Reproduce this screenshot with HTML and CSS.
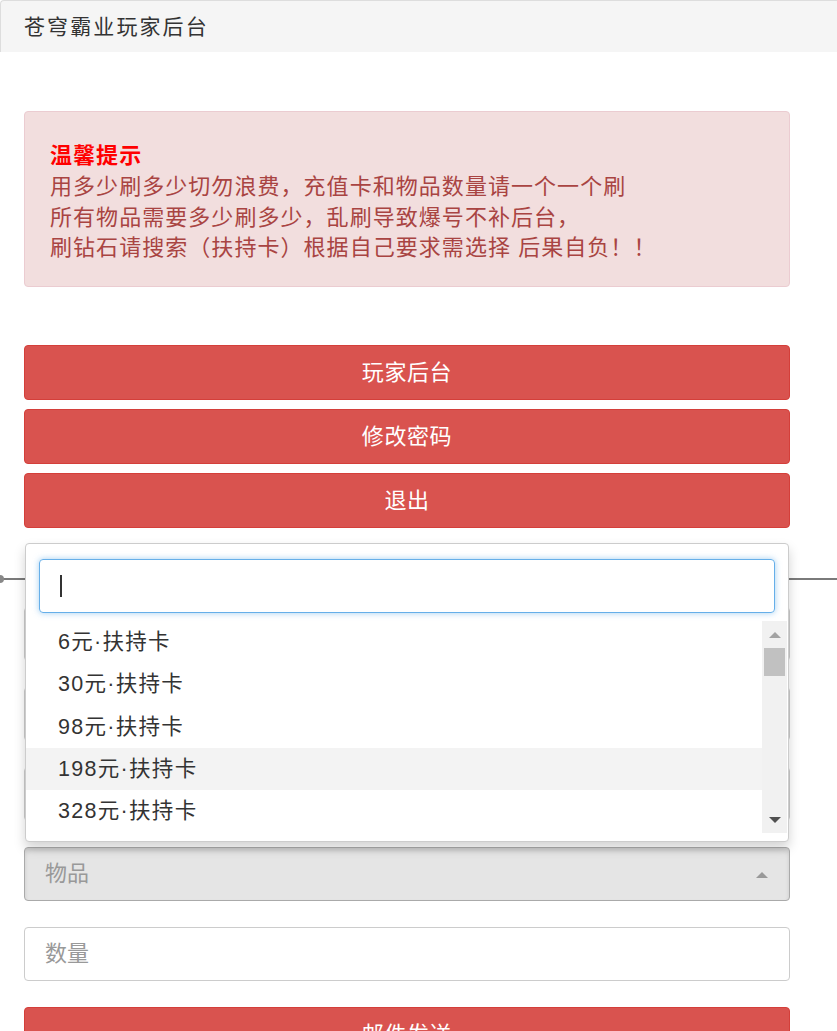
FILE: index.html
```html
<!DOCTYPE html>
<html lang="zh-CN">
<head>
<meta charset="utf-8">
<title>苍穹霸业玩家后台</title>
<link rel="stylesheet" href="styles.css">
</head>
<body>
<div class="topbar">苍穹霸业玩家后台</div>
<div class="page">
  <div class="alert">
    <div class="alert-title">温馨提示</div>
    <div>用多少刷多少切勿浪费，充值卡和物品数量请一个一个刷</div>
    <div>所有物品需要多少刷多少，乱刷导致爆号不补后台，</div>
    <div>刷钻石请搜索（扶持卡）根据自己要求需选择 后果自负！！</div>
  </div>
  <div class="btn-group">
    <div class="btn">玩家后台</div>
    <div class="btn">修改密码</div>
    <div class="btn">退出</div>
  </div>
  <div class="divider"></div>
  <div class="form">
    <div class="field"></div>
    <div class="field"></div>
    <div class="field"></div>
    <div class="field select-open"><span class="ph">物品</span><span class="caret-up"></span></div>
    <div class="field"><span class="ph">数量</span></div>
    <div class="btn">邮件发送</div>
  </div>
</div>

<div class="dropdown">
  <div class="search"><span class="cursor"></span></div>
  <div class="results">
    <div class="options">
      <div class="opt">6元·扶持卡</div>
      <div class="opt">30元·扶持卡</div>
      <div class="opt">98元·扶持卡</div>
      <div class="opt hl">198元·扶持卡</div>
      <div class="opt">328元·扶持卡</div>
    </div>
    <div class="scrollbar">
      <div class="sb-up"></div>
      <div class="sb-track"><div class="sb-thumb"></div></div>
      <div class="sb-down"></div>
    </div>
  </div>
</div>
</body>
</html>
```
FILE: styles.css
```css
* { box-sizing: border-box; }
html, body { margin: 0; padding: 0; background: #fff; }
body {
  font-family: "Liberation Sans", "Noto Sans CJK SC", sans-serif;
  font-size: 22px;
  line-height: 30px;
  color: #333;
  width: 837px;
  height: 1031px;
  overflow: hidden;
}
.topbar {
  height: 52px;
  background: #f5f5f5;
  border-top: 1px solid #ddd;
  border-left: 1px solid #ddd;
  border-top-left-radius: 4px;
  padding-left: 23px;
  display: flex;
  align-items: center;
  font-size: 21px;
  letter-spacing: 2.1px;
  color: #333;
}
.page {
  padding: 0 47px 0 24px;
}
.alert {
  margin-top: 59px;
  height: 176px;
  background: #f2dede;
  border: 1px solid #ebccd1;
  border-radius: 4px;
  padding: 29px 25px 0 25px;
  color: #a94442;
  line-height: 30.8px;
  letter-spacing: 1.05px;
}
.alert-title {
  color: #ff0000;
  font-weight: 700;
}
.btn-group {
  margin-top: 58px;
  display: flex;
  flex-direction: column;
  gap: 9px;
}
.btn {
  height: 55px;
  background: #d9534f;
  border: 1px solid #d43f3a;
  border-radius: 4px;
  color: #fff;
  display: flex;
  align-items: center;
  justify-content: center;
  letter-spacing: 0.6px;
}
.divider {
  margin: 50px -47px 0 -24px;
  height: 2px;
  background: #7a7a7a;
  position: relative;
}
.divider::before {
  content: "";
  position: absolute;
  left: -4px;
  top: -3px;
  width: 8px;
  height: 8px;
  border-radius: 50%;
  background: #888;
}
.form {
  margin-top: 27px;
  display: flex;
  flex-direction: column;
  gap: 26px;
}
.field {
  height: 54px;
  border: 1px solid #ccc;
  border-radius: 4px;
  background: #fff;
  display: flex;
  align-items: center;
  padding-left: 20px;
  position: relative;
}
.field .ph {
  color: #999;
}
.select-open {
  background: #e5e5e5;
  border-color: #aaa;
  box-shadow: inset 0 3px 4px rgba(0,0,0,0.12);
}
.caret-up {
  position: absolute;
  right: 21px;
  top: 24px;
  width: 0;
  height: 0;
  border-left: 6px solid transparent;
  border-right: 6px solid transparent;
  border-bottom: 6px solid #999;
}

.dropdown {
  position: absolute;
  left: 25px;
  top: 543px;
  width: 764px;
  height: 299px;
  background: #fff;
  border: 1px solid #ccc;
  border-radius: 4px;
  box-shadow: 0 6px 12px rgba(0,0,0,0.175);
  padding: 15px 0 0 0;
}
.search {
  margin: 0 13px 0 13px;
  height: 54px;
  border: 1px solid #66afe9;
  border-radius: 4px;
  box-shadow: 0 0 6px rgba(102,175,233,0.6);
  display: flex;
  align-items: center;
  padding-left: 20px;
}
.cursor {
  width: 2px;
  height: 22px;
  background: #333;
}
.results {
  margin-top: 8px;
  height: 212px;
  display: flex;
  overflow: hidden;
}
.options {
  flex: 1;
}
.opt {
  height: 42.33px;
  display: flex;
  align-items: center;
  padding-left: 32px;
  color: #333;
  font-size: 21.5px;
  letter-spacing: 1.3px;
}
.opt.hl { background: #f3f3f3; }
.scrollbar {
  width: 25px;
  margin-right: 1px;
  background: #f1f1f1;
  display: flex;
  flex-direction: column;
  align-items: center;
}
.sb-up, .sb-down {
  height: 27px;
  width: 100%;
  display: flex;
  align-items: center;
  justify-content: center;
}
.sb-up::before {
  content: "";
  border-left: 6px solid transparent;
  border-right: 6px solid transparent;
  border-bottom: 6px solid #a3a3a3;
}
.sb-down::before {
  content: "";
  border-left: 6px solid transparent;
  border-right: 6px solid transparent;
  border-top: 6px solid #505050;
}
.sb-track {
  flex: 1;
  width: 100%;
  padding: 0 2px;
}
.sb-thumb {
  height: 28px;
  background: #c1c1c1;
}
```
